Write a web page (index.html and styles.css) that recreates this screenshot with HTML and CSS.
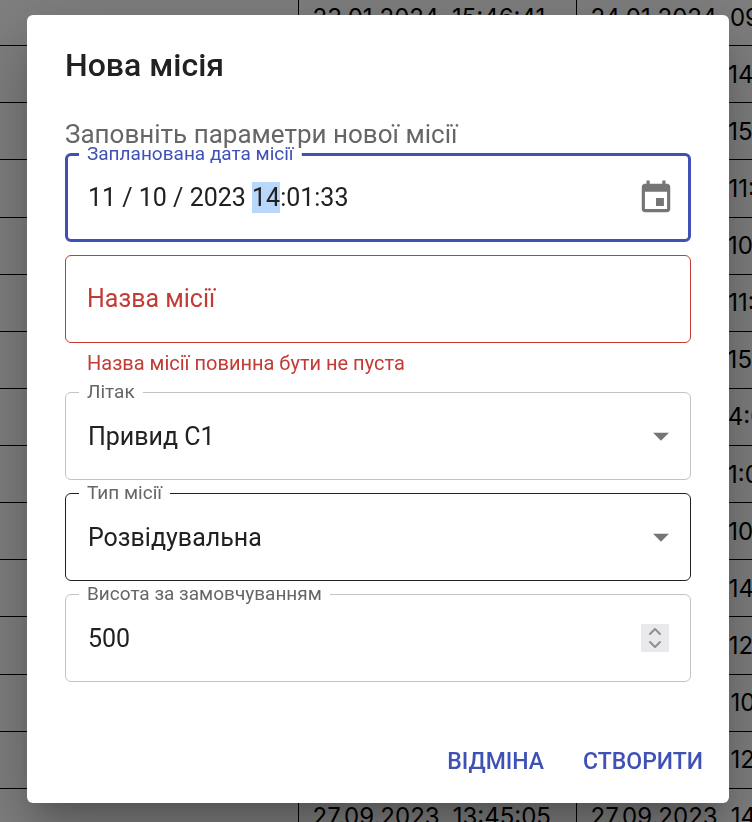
FILE: index.html
```
<!DOCTYPE html>
<html lang="uk">
<head>
    <meta charset="UTF-8">
    <meta name="viewport" content="width=device-width, initial-scale=1.0">
    <title>Нова місія</title>
    <link rel="stylesheet" href="styles.css">
</head>
<body>

    <div class="page">
        <table class="missions">
            <tbody>
                <tr><td></td><td>23.01.2024, 15:46:41</td><td>24.01.2024, 09:12:30</td></tr>
                <tr><td></td><td></td><td>22.12.2023, 14:20:11</td></tr>
                <tr><td></td><td></td><td>20.12.2023, 15:02:45</td></tr>
                <tr><td></td><td></td><td>08.12.2023, 11:31:09</td></tr>
                <tr><td></td><td></td><td>05.12.2023, 10:44:52</td></tr>
                <tr><td></td><td></td><td>30.10.2023, 11:17:26</td></tr>
                <tr><td></td><td></td><td>26.10.2023, 15:38:00</td></tr>
                <tr><td></td><td></td><td>24.10.2023, 4:05:13</td></tr>
                <tr><td></td><td></td><td>20.10.2023, 1:06:48</td></tr>
                <tr><td></td><td></td><td>08.10.2023, 10:29:34</td></tr>
                <tr><td></td><td></td><td>04.10.2023, 14:51:07</td></tr>
                <tr><td></td><td></td><td>02.10.2023, 12:33:19</td></tr>
                <tr><td></td><td></td><td>01.09.2023, 10:15:55</td></tr>
                <tr><td></td><td></td><td>01.09.2023, 12:40:02</td></tr>
                <tr><td></td><td>27.09.2023, 13:45:05</td><td>27.09.2023, 14:10:21</td></tr>
            </tbody>
        </table>
    </div>

    <div class="backdrop">
        <form class="dialog" role="dialog" aria-labelledby="dialog-title">
            <h2 id="dialog-title" class="dialog-title">Нова місія</h2>

            <div class="dialog-content">
                <p class="description">Заповніть параметри нової місії</p>

                <div class="field focused">
                    <label for="date">Запланована дата місії</label>
                    <input id="date" type="text" value="11 / 10 / 2023 14:01:33">
                    <button type="button" class="calendar" aria-label="Обрати дату">
                        <svg viewBox="0 0 24 24"><path d="M17 12h-5v5h5v-5zM16 1v2H8V1H6v2H5c-1.11 0-1.99.9-1.99 2L3 19c0 1.1.89 2 2 2h14c1.1 0 2-.9 2-2V5c0-1.1-.9-2-2-2h-1V1h-2zm3 18H5V8h14v11z"/></svg>
                    </button>
                </div>

                <div class="field error">
                    <label for="name">Назва місії</label>
                    <input id="name" type="text" aria-describedby="name-error">
                </div>
                <p id="name-error" class="helper">Назва місії повинна бути не пуста</p>

                <div class="field">
                    <label for="plane">Літак</label>
                    <select id="plane"><option>Привид С1</option></select>
                    <svg class="arrow" viewBox="0 0 24 24"><path d="M7 10l5 5 5-5z"/></svg>
                </div>

                <div class="field hovered">
                    <label for="type">Тип місії</label>
                    <select id="type"><option>Розвідувальна</option></select>
                    <svg class="arrow" viewBox="0 0 24 24"><path d="M7 10l5 5 5-5z"/></svg>
                </div>

                <div class="field">
                    <label for="height">Висота за замовчуванням</label>
                    <input id="height" type="number" value="500">
                    <svg class="spinner" viewBox="0 0 28 28"><path d="M9 10l5-5 5 5M9 18l5 5 5-5"/></svg>
                </div>
            </div>

            <div class="dialog-actions">
                <button type="button">Відміна</button>
                <button type="submit">Створити</button>
            </div>
        </form>
    </div>

    <script>
        // виділяємо години в даті
        const date = document.getElementById('date');
        date.focus();
        date.setSelectionRange(15, 17);
    </script>

</body>
</html>
```
FILE: styles.css
```
* { box-sizing: border-box; }
body { margin: 0; font-family: Roboto, "Liberation Sans", sans-serif; font-size: 25px; color: #212121; }
h2, p { margin: 0; }

/* table under the dialog */
.page { height: 100vh; overflow: hidden; }
.missions { width: 854px; height: calc(100vh + 36px); margin-top: -12px; border-collapse: collapse; table-layout: fixed; font-family: Inter, sans-serif; font-size: 24px; color: #000; }
.missions td { width: 278px; padding: 0 14px; border: 1px solid #000; border-left: 0; white-space: nowrap; }
.missions td:first-child { width: 298px; }

.backdrop { position: fixed; inset: 0; padding: 15px 23px 19px 27px; background: rgba(0, 0, 0, 0.5); overflow: hidden; }
.dialog { background: #fff; border-radius: 6px; box-shadow: 0 17px 24px -11px rgba(0, 0, 0, 0.2), 0 38px 60px 5px rgba(0, 0, 0, 0.14), 0 14px 72px 13px rgba(0, 0, 0, 0.12); }
.dialog-title { padding: 25px 38px 24px; font-size: 32px; line-height: 51px; font-weight: 500; }
.dialog-content { padding: 0 38px 38px; }
.description { font-size: 26px; line-height: 38px; color: #666; }

.field { position: relative; display: flex; align-items: center; height: 88px; padding: 0 21px 0 22px; border: 1px solid #c4c4c4; border-radius: 6px; }
.field + .field, .helper + .field { margin-top: 13px; }
.field label { position: absolute; top: -15px; left: 13px; padding: 0 8px; font-size: 19px; line-height: 28px; color: #666; background: linear-gradient(#fff, #fff) center / 100% 6px no-repeat; }
.field input, .field select { flex: 1; min-width: 0; height: 31px; padding: 0; border: 0; outline: 0; background: none; font: inherit; line-height: 31px; color: inherit; appearance: none; }
.field input[type="number"] { appearance: textfield; }
.field ::selection { background: #b9d6fb; color: #212121; }

.focused { height: 89px; padding: 0 13px 0 20px; border: 3px solid #3f51b5; }
.focused label { top: -16px; left: 11px; color: #3f51b5; }
.hovered { border-color: #212121; }
.error { border-color: #c23b35; }
.error label { top: 29px; font-size: 25px; color: #c23b35; }
.helper { margin: 5px 22px 0; font-size: 20px; line-height: 31px; color: #c23b35; }

.calendar { width: 38px; height: 38px; padding: 0; border: 0; background: none; fill: #757575; cursor: pointer; }
.calendar svg { display: block; }
.arrow { position: absolute; right: 10px; width: 38px; height: 38px; fill: #757575; pointer-events: none; }
.spinner { width: 28px; height: 28px; background: #e9e9eb; fill: none; stroke: #8e8e9a; stroke-width: 2; stroke-linecap: round; stroke-linejoin: round; }

.dialog-actions { display: flex; justify-content: flex-end; gap: 13px; padding: 13px; }
.dialog-actions button { padding: 9px 13px; border: 0; border-radius: 6px; background: none; font: inherit; font-size: 23px; line-height: 39px; font-weight: 500; color: #3f51b5; text-transform: uppercase; cursor: pointer; }
```
